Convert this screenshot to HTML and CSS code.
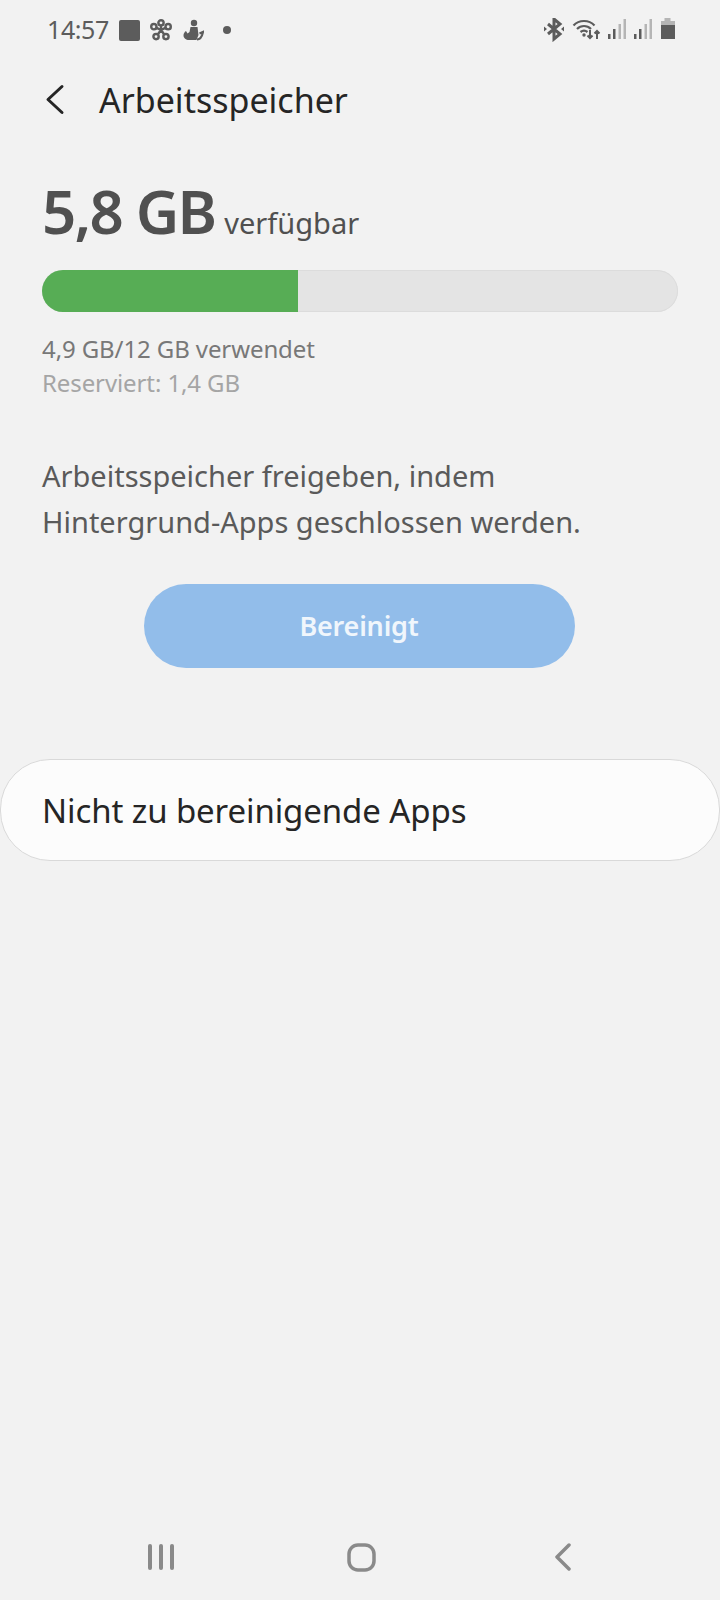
FILE: index.html
```html
<!DOCTYPE html>
<html lang="de">
<head>
    <meta charset="UTF-8">
    <meta name="viewport" content="width=device-width, initial-scale=1.0">
    <title>Arbeitsspeicher</title>
    <link rel="stylesheet" href="styles.css">
</head>
<body>
    <div class="screen">
        <div class="status-bar">
            <div class="status-left">
                <span class="clock">14:57</span>
                <span class="stop-icon"></span>
                <svg class="status-icon" width="22" height="22" viewBox="1 1 20 20" fill="none" stroke="#5c5c5c" stroke-width="2.2">
                    <circle cx="11" cy="4.5" r="2.4"/>
                    <circle cx="4.5" cy="8" r="2.4"/>
                    <circle cx="17.5" cy="8" r="2.4"/>
                    <circle cx="6.5" cy="17" r="2.4"/>
                    <circle cx="15.5" cy="17" r="2.4"/>
                    <path d="M11 7v4M7 9l4 2 4-2M8 15l3-4 3 4"/>
                </svg>
                <svg class="status-icon" width="22" height="22" viewBox="0 0 22 22" fill="#5c5c5c">
                    <circle cx="12" cy="4" r="3.200"/>
                    <path d="M8.500 8h7l1 8-2 5H7c-3 0-5.500-2-5.500-4.500 0-2 1-3.500 2.500-4.500l1.500 2.500 2-1.500z"/>
                    <path d="M15 20.500c3 0 5-2.500 6-7.500l-3.500 1.500" fill="none" stroke="#5c5c5c" stroke-width="2.200"/>
                </svg>
                <span class="dot"></span>
            </div>
            <div class="status-right">
                <svg width="24" height="24" viewBox="0 0 24 24" fill="none" stroke="#5c5c5c" stroke-width="3">
                    <path d="M6 6l12 10-6 5V1l6 5L6 16"/>
                    <path d="M2 8.500l3 2.500-3 2.500zM22 8.500l-3 2.500 3 2.500z" fill="#5c5c5c" stroke="none"/>
                </svg>
                <svg width="30" height="24" viewBox="0 0 30 24" fill="none" stroke="#5c5c5c" stroke-width="2.200">
                    <path d="M1.500 7.500C7 1.500 17 1.500 22.500 7.500M5 11c4-4 10-4 14 0M8.500 14c2-1.500 5-1.500 7 0"/>
                    <circle cx="12" cy="17" r="1.700" fill="#5c5c5c" stroke="none"/>
                    <path d="M18 12v8M15.500 17.500l2.500 2.500 2.500-2.500M25 21v-8M22.500 15.500l2.500-2.500 2.500 2.500" stroke-width="2"/>
                </svg>
                <svg width="20" height="24" viewBox="0 0 20 24">
                    <rect x="0" y="16" width="2.500" height="5" fill="#5c5c5c"/>
                    <rect x="5" y="11" width="2.500" height="10" fill="#5c5c5c"/>
                    <rect x="10.500" y="6" width="2.500" height="15" fill="#b5b5b5"/>
                    <rect x="15.500" y="1" width="2.500" height="20" fill="#b5b5b5"/>
                </svg>
                <svg width="20" height="24" viewBox="0 0 20 24">
                    <rect x="0" y="16" width="2.500" height="5" fill="#5c5c5c"/>
                    <rect x="5" y="11" width="2.500" height="10" fill="#5c5c5c"/>
                    <rect x="10.500" y="6" width="2.500" height="15" fill="#b5b5b5"/>
                    <rect x="15.500" y="1" width="2.500" height="20" fill="#b5b5b5"/>
                </svg>
                <svg width="16" height="24" viewBox="0 0 16 24">
                    <path d="M4.500 0h6v3h-6z" fill="#b5b5b5"/>
                    <path d="M1 3h14v5H1z" fill="#b5b5b5"/>
                    <rect x="1" y="7" width="14" height="14" fill="#5c5c5c"/>
                </svg>
            </div>
        </div>

        <div class="title-bar">
            <svg class="back-icon" width="20" height="32" viewBox="0 0 20 32" fill="none" stroke="#252525" stroke-width="3" stroke-linecap="round" stroke-linejoin="round">
                <path d="M17 2.500L3 15.500l14 13"/>
            </svg>
            <h1 class="title">Arbeitsspeicher</h1>
        </div>

        <div class="memory">
            <div class="available"><span class="available-value">5,8 GB</span> <span class="available-label">verfügbar</span></div>
            <div class="bar"><div class="bar-fill" style="width: 256px"></div></div>
            <div class="used">4,9 GB/12 GB verwendet</div>
            <div class="reserved">Reserviert: 1,4 GB</div>
        </div>

        <p class="hint">Arbeitsspeicher freigeben, indem Hintergrund-Apps geschlossen werden.</p>

        <div class="button-row">
            <div class="clean-button">Bereinigt</div>
        </div>

        <div class="list-card">Nicht zu bereinigende Apps</div>

        <div class="nav-bar">
            <svg width="26" height="28" viewBox="0 0 26 28" fill="#8a8a8a">
                <rect x="0" y="1" width="4" height="26" rx="2"/>
                <rect x="11" y="1" width="4" height="26" rx="2"/>
                <rect x="22" y="1" width="4" height="26" rx="2"/>
            </svg>
            <svg class="home-icon" width="29" height="29" viewBox="0 0 29 29" fill="none" stroke="#8a8a8a" stroke-width="3.500">
                <rect x="2" y="2" width="25" height="25" rx="9"/>
            </svg>
            <svg width="18" height="28" viewBox="0 0 18 28" fill="none" stroke="#8a8a8a" stroke-width="3.500" stroke-linecap="round" stroke-linejoin="round">
                <path d="M16 2L4 14l12 12"/>
            </svg>
        </div>
    </div>
</body>
</html>
```

FILE: styles.css
```css
html, body {
    margin: 0;
    padding: 0;
}
body {
    font-family: "Noto Sans", sans-serif;
    background-color: #f2f2f2;
}
.screen {
    width: 720px;
    height: 1600px;
    display: flex;
    flex-direction: column;
    overflow: hidden;
}
.status-bar {
    height: 60px;
    padding: 0 44px 0 47px;
    display: flex;
    justify-content: space-between;
    align-items: center;
    box-sizing: border-box;
}
.status-left {
    display: flex;
    align-items: center;
    gap: 10px;
}
.status-right {
    display: flex;
    align-items: center;
    gap: 6px;
}
.clock {
    font-size: 25px;
    line-height: 30px;
    letter-spacing: -0.4px;
    color: #5c5c5c;
    margin-top: -2px;
}
.stop-icon {
    width: 21px;
    height: 21px;
    border-radius: 2px;
    background-color: #5c5c5c;
}
.dot {
    width: 8px;
    height: 8px;
    margin-left: 9px;
    border-radius: 50%;
    background-color: #5c5c5c;
}
.title-bar {
    height: 80px;
    padding-left: 45px;
    display: flex;
    align-items: center;
    gap: 34px;
}
.title {
    margin: 0;
    font-size: 34px;
    font-weight: 400;
    color: #252525;
}
.memory {
    padding: 32px 42px 0;
}
.available {
    height: 74px;
    display: flex;
    align-items: baseline;
    gap: 9px;
    color: #505050;
}
.available-value {
    font-size: 60px;
    font-weight: 600;
    letter-spacing: -1.8px;
    line-height: 78px;
}
.available-label {
    font-size: 29px;
}
.bar {
    height: 42px;
    margin-top: 24px;
    border-radius: 21px;
    background-color: #e4e4e4;
    box-shadow: inset 0 0 0 1px #dcdcdc;
    overflow: hidden;
}
.bar-fill {
    height: 100%;
    background-color: #57ad55;
}
.used {
    margin-top: 20px;
    font-size: 24px;
    letter-spacing: -0.1px;
    line-height: 34px;
    color: #787878;
}
.reserved {
    font-size: 24px;
    letter-spacing: -0.1px;
    line-height: 34px;
    color: #a5a5a5;
}
.hint {
    margin: 53px 42px 0;
    font-size: 29px;
    line-height: 46px;
    color: #5a5a5a;
}
.button-row {
    margin-top: 39px;
    padding-right: 2px;
    display: flex;
    justify-content: center;
}
.clean-button {
    width: 431px;
    height: 84px;
    border-radius: 42px;
    background-color: #92bdea;
    color: #f0f6fc;
    font-size: 27px;
    font-weight: 600;
    letter-spacing: -0.2px;
    line-height: 84px;
    text-align: center;
}
.list-card {
    height: 102px;
    margin-top: 91px;
    padding-left: 41px;
    box-sizing: border-box;
    border: 1px solid #d9d9d9;
    border-radius: 50px;
    background-color: #fcfcfc;
    color: #252525;
    font-size: 33px;
    letter-spacing: -0.1px;
    line-height: 102px;
}
.nav-bar {
    margin-top: auto;
    height: 86px;
    padding: 0 149px 0 148px;
    display: flex;
    justify-content: space-between;
    align-items: center;
    box-sizing: border-box;
}
.home-icon {
    margin-right: 4px;
}
```
